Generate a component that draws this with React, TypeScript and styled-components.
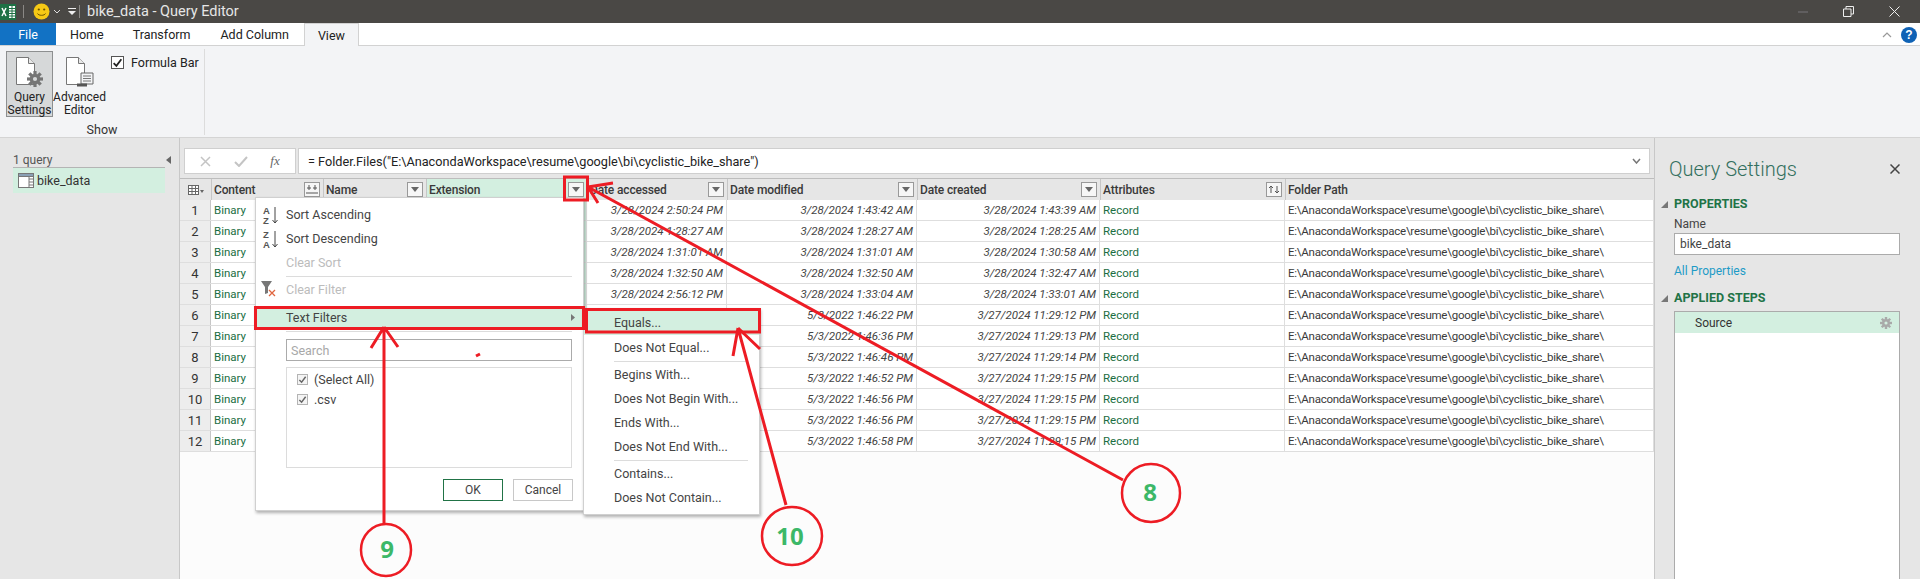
import React from 'react';
import styled, {createGlobalStyle} from 'styled-components';

const FONT = `Roboto, "Noto Sans", "Liberation Sans", sans-serif`;
const GREEN_ROW = '#d3efe0';
const PANEL = '#e6e6e6';
const RED = '#ed1c24';

const GlobalStyle = createGlobalStyle`
  html, body {
    margin: 0;
    padding: 0;
    background: #fff;
  }
  body {
    font-family: ${FONT};
    font-size: 12px;
    color: #333;
  }
`;

const Page = styled.div`
  position: relative;
  width: 1920px;
  height: 579px;
  overflow: hidden;
  display: flex;
  flex-direction: column;
`;

const TitleBar = styled.div`
  height: 23px;
  flex: none;
  display: flex;
  align-items: center;
  background: #4a4845;
  color: #e6e6e6;
  font-size: 14.5px;
`;

const TitleSep = styled.span<{$left: number; $right: number}>`
  width: 1px;
  height: 13px;
  margin: 0 ${p => p.$right}px 0 ${p => p.$left}px;
  background: #8a8885;
`;

const WindowButtons = styled.div`
  margin-left: auto;
  display: flex;
  align-items: center;
  gap: 35px;
  padding-right: 20px;
`;

const SmallChevron = styled.svg`
  margin-left: 3px;
`;

const QatArrow = styled.svg`
  margin-left: 7px;
`;

const TabBar = styled.div`
  height: 23px;
  flex: none;
  display: flex;
  align-items: stretch;
  background: #fff;
  position: relative;
  font-size: 12.5px;
  &::after {
    content: '';
    position: absolute;
    left: 0;
    right: 0;
    bottom: 0;
    height: 1px;
    background: #d2d2d2;
  }
`;

const FileTab = styled.div`
  width: 56px;
  background: #1272c4;
  color: #fff;
  display: flex;
  align-items: center;
  justify-content: center;
`;

const Tab = styled.div<{$active?: boolean; $left: number}>`
  margin-left: ${p => p.$left}px;
  padding: 0 14px;
  display: flex;
  align-items: center;
  color: #222;
  position: relative;
  z-index: 1;
  ${p =>
    p.$active &&
    `
    background: #f3f4f6;
    border: 1px solid #d2d2d2;
    border-bottom: 0;
    padding: 0 13px;
  `}
`;

const TabRight = styled.div`
  margin-left: auto;
  display: flex;
  align-items: center;
  gap: 9px;
  padding-right: 3px;
`;

const Ribbon = styled.div`
  height: 88px;
  flex: none;
  display: flex;
  background: #f3f4f6;
  border-bottom: 1px solid #d4d4d4;
  padding-top: 3px;
`;

const RibbonGroup = styled.div`
  width: 205px;
  height: 86px;
  border-right: 1px solid #dcdcdc;
  display: flex;
  flex-direction: column;
  box-sizing: border-box;
`;

const RibbonTools = styled.div`
  display: flex;
  padding-left: 6px;
  align-items: flex-start;
  margin-top: 2px;
`;

const RibbonTile = styled.div<{$active?: boolean}>`
  width: ${p => (p.$active ? 47 : 53)}px;
  height: 66px;
  box-sizing: border-box;
  display: flex;
  flex-direction: column;
  align-items: center;
  line-height: 13px;
  text-align: center;
  color: #222;
  padding-top: 4px;
  font-size: 12px;
  background: ${p => (p.$active ? '#d6d8d9' : 'transparent')};
  border: 1px solid ${p => (p.$active ? '#8d8f90' : 'transparent')};
  svg {
    margin-bottom: 3px;
    flex: none;
  }
`;

const CheckRow = styled.div`
  display: flex;
  align-items: center;
  gap: 7px;
  margin: 4px 0 0 5px;
  color: #222;
  font-size: 12.5px;
`;

const CheckBoxIcon = styled.span`
  width: 13px;
  height: 13px;
  flex: none;
  box-sizing: border-box;
  border: 1px solid #555;
  background: #fff;
  display: flex;
  align-items: center;
  justify-content: center;
`;

const GroupLabel = styled.div`
  text-align: center;
  margin-top: 5px;
  color: #333;
  font-size: 12.5px;
`;

const Workspace = styled.div`
  flex: 1;
  min-height: 0;
  display: flex;
`;

const QueriesPane = styled.div`
  width: 180px;
  flex: none;
  box-sizing: border-box;
  background: ${PANEL};
  border-right: 1px solid #c8c8c8;
  padding: 14px 14px 0 13px;
`;

const PaneHeader = styled.div`
  display: flex;
  align-items: center;
  justify-content: space-between;
  height: 15px;
  color: #555;
  border-bottom: 1px solid #b4b4b4;
  svg {
    margin-right: -6px;
  }
`;

const QueryItem = styled.div`
  height: 25px;
  background: ${GREEN_ROW};
  display: flex;
  align-items: center;
  gap: 3px;
  padding-left: 5px;
  color: #333;
  font-size: 12.5px;
`;

const MainPane = styled.div`
  flex: 1;
  min-width: 0;
  display: flex;
  flex-direction: column;
  background: #fcfcfc;
`;

const FormulaRow = styled.div`
  height: 40px;
  flex: none;
  box-sizing: border-box;
  background: ${PANEL};
  padding: 10px 4px 4px 4px;
  display: flex;
  gap: 2px;
`;

const FormulaButtons = styled.div`
  width: 112px;
  box-sizing: border-box;
  background: #fff;
  border: 1px solid #cfcfcf;
  display: flex;
  align-items: center;
  justify-content: space-around;
  padding: 0 4px;
`;

const FxLabel = styled.span`
  font-family: 'Liberation Serif', serif;
  font-style: italic;
  font-size: 13px;
  color: #666;
`;

const FormulaInput = styled.div`
  flex: 1;
  box-sizing: border-box;
  background: #fff;
  border: 1px solid #cfcfcf;
  display: flex;
  align-items: center;
  justify-content: space-between;
  padding: 0 8px 0 9px;
  font-size: 12.7px;
  color: #222;
`;

const GRID_COLUMNS = '31px 112px 103px 161px 140px 190px 183px 185px 1fr';

const GridHeader = styled.div`
  height: 22px;
  flex: none;
  box-sizing: border-box;
  display: grid;
  grid-template-columns: ${GRID_COLUMNS};
  background: ${PANEL};
  border-top: 1px solid #bdbdbd;
`;

const HeaderCell = styled.div<{$selected?: boolean}>`
  display: flex;
  align-items: center;
  justify-content: space-between;
  padding: 0 3px 0 2px;
  box-sizing: border-box;
  border-left: 1px solid #c6c6c6;
  font-weight: 500;
  letter-spacing: -0.15px;
  color: #3a3a3a;
  background: ${p => (p.$selected ? GREEN_ROW : 'transparent')};
`;

const CornerCell = styled.div`
  display: flex;
  align-items: center;
  justify-content: center;
`;

const FilterButton = styled.span`
  width: 16px;
  height: 15px;
  flex: none;
  box-sizing: border-box;
  border: 1px solid #999;
  background: #f6f6f6;
  display: flex;
  align-items: center;
  justify-content: center;
`;

const GridRow = styled.div`
  height: 21px;
  flex: none;
  box-sizing: border-box;
  display: grid;
  grid-template-columns: ${GRID_COLUMNS};
  background: #fff;
  border-bottom: 1px solid #dedede;
`;

const IndexCell = styled.div`
  display: flex;
  align-items: center;
  justify-content: center;
  background: #ededed;
  border-right: 1px solid #c6c6c6;
  font-size: 13px;
  color: #333;
`;

const Cell = styled.div<{$kind?: 'link' | 'date' | 'selected' | 'path'}>`
  display: flex;
  align-items: center;
  box-sizing: border-box;
  padding: 0 3px;
  white-space: nowrap;
  overflow: hidden;
  font-size: 11.5px;
  border-right: 1px solid #dedede;
  color: ${p => (p.$kind === 'link' ? '#1b6e43' : p.$kind === 'date' ? '#444' : '#3a3a3a')};
  font-style: ${p => (p.$kind === 'date' ? 'italic' : 'normal')};
  letter-spacing: ${p => (p.$kind === 'path' ? '-0.25px' : '0')};
  justify-content: ${p => (p.$kind === 'date' ? 'flex-end' : 'flex-start')};
  background: ${p => (p.$kind === 'selected' ? GREEN_ROW : 'transparent')};
`;

const SettingsPane = styled.div`
  width: 266px;
  flex: none;
  box-sizing: border-box;
  background: ${PANEL};
  border-left: 1px solid #c8c8c8;
  display: flex;
  flex-direction: column;
  padding: 16px 20px 0 19px;
`;

const SettingsHead = styled.div`
  display: flex;
  align-items: center;
  justify-content: space-between;
  height: 30px;
  margin-left: -5px;
  font-size: 20px;
  font-weight: 300;
  color: #33705e;
`;

const SectionTitle = styled.div<{$top: number}>`
  position: relative;
  margin-top: ${p => p.$top}px;
  font-weight: 700;
  font-size: 12.5px;
  line-height: 16px;
  color: #217346;
  svg {
    position: absolute;
    left: -13px;
    top: 5px;
  }
`;

const FieldLabel = styled.div`
  margin-top: 4px;
  line-height: 16px;
  color: #444;
`;

const TextBox = styled.div`
  margin-top: 1px;
  height: 22px;
  box-sizing: border-box;
  border: 1px solid #ababab;
  background: #fff;
  display: flex;
  align-items: center;
  padding: 0 5px;
  color: #444;
`;

const PropsLink = styled.div`
  margin-top: 8px;
  line-height: 16px;
  color: #1e9bc6;
`;

const StepsBox = styled.div`
  margin-top: 5px;
  flex: 1;
  border: 1px solid #ababab;
  border-bottom: 0;
  background: #fff;
`;

const StepRow = styled.div`
  height: 21px;
  background: ${GREEN_ROW};
  display: flex;
  align-items: center;
  justify-content: space-between;
  padding: 0 7px 0 20px;
  color: #333;
`;

const FilterMenu = styled.div`
  position: absolute;
  left: 255px;
  top: 197px;
  width: 329px;
  height: 314px;
  box-sizing: border-box;
  padding-top: 4px;
  background: #fff;
  border: 1px solid #d0d0d0;
  box-shadow: 1px 2px 3px rgba(0, 0, 0, 0.3);
  display: flex;
  flex-direction: column;
`;

const SubMenu = styled(FilterMenu)`
  left: 583px;
  top: 308px;
  width: 177px;
  height: 207px;
  padding-top: 1px;
`;

const MenuItem = styled.div<{$disabled?: boolean; $active?: boolean}>`
  height: ${p => (p.$active ? 25 : 24)}px;
  flex: none;
  display: flex;
  align-items: center;
  position: relative;
  padding-left: 30px;
  font-size: 12.5px;
  color: ${p => (p.$disabled ? '#bcbcbc' : '#444')};
  background: ${p => (p.$active ? GREEN_ROW : 'transparent')};
`;

const MenuIcon = styled.span`
  position: absolute;
  left: 4px;
  top: 3px;
  display: flex;
`;

const FilterItem = styled(MenuItem)`
  height: 22px;
  margin-top: 5px;
  justify-content: space-between;
  padding-right: 8px;
`;

const MenuSep = styled.div<{$y?: number}>`
  height: 1px;
  flex: none;
  margin: ${p => p.$y ?? 2}px 11px 0 30px;
  background: #dcdcdc;
`;

const SearchBox = styled.div`
  height: 22px;
  flex: none;
  box-sizing: border-box;
  margin: 7px 11px 0 30px;
  border: 1px solid #ababab;
  display: flex;
  align-items: center;
  padding: 0 4px;
  color: #a8a8a8;
  font-size: 12.5px;
`;

const ValueList = styled.div`
  height: 101px;
  flex: none;
  box-sizing: border-box;
  margin: 6px 11px 0 30px;
  border: 1px solid #dcdcdc;
  padding: 1px 10px;
`;

const ValueRow = styled.div`
  height: 20px;
  display: flex;
  align-items: center;
  gap: 6px;
  color: #444;
  font-size: 12.5px;
`;

const ValueCheck = styled.span`
  width: 11px;
  height: 11px;
  box-sizing: border-box;
  border: 1px solid #b4b4b4;
  background: #f4f4f4;
  display: flex;
  align-items: center;
  justify-content: center;
`;

const MenuButtons = styled.div`
  display: flex;
  justify-content: flex-end;
  gap: 10px;
  margin: 11px 10px 0 0;
`;

const MenuButton = styled.div<{$primary?: boolean}>`
  width: 60px;
  height: 22px;
  box-sizing: border-box;
  display: flex;
  align-items: center;
  justify-content: center;
  color: #444;
  background: #fff;
  border: 1px solid ${p => (p.$primary ? '#217346' : '#c8c8c8')};
`;

const Annotations = styled.svg`
  position: absolute;
  left: 0;
  top: 0;
  pointer-events: none;
`;

const StepNumber = styled.text`
  font-family: "Open Sans", ${FONT};
  font-weight: 700;
  font-size: 24px;
  fill: #3cb868;
  text-anchor: middle;
`;

const ExcelLogo = () => (
  <svg width="16" height="18" viewBox="0 0 16 18">
    <rect x="0" y="1" width="16" height="16" fill="#1e7145" />
    <rect x="9" y="3" width="6" height="12" fill="#fff" />
    <path d="M9 5.5h6M9 8h6M9 10.5h6M9 13h6M12 3v12" stroke="#1e7145" strokeWidth="1" />
    <path d="M2 5l4 8M6 5l-4 8" stroke="#fff" strokeWidth="1.5" />
  </svg>
);

const Smiley = () => (
  <svg width="17" height="17" viewBox="0 0 17 17">
    <circle cx="8.5" cy="8.5" r="8" fill="#f6c915" />
    <circle cx="5.8" cy="6.5" r="1.1" fill="#6b5200" />
    <circle cx="11.2" cy="6.5" r="1.1" fill="#6b5200" />
    <path d="M4.5 10.5c1 2.4 7 2.4 8 0" stroke="#6b5200" strokeWidth="1" fill="none" />
  </svg>
);

const PageIcon = ({children}: {children?: React.ReactNode}) => (
  <svg width="30" height="32" viewBox="0 0 30 32">
    <path d="M1.5 1.5h12l6 6v21h-18z" fill="#fff" stroke="#777" strokeWidth="1" />
    <path d="M13.5 1.5v6h6" fill="#e8e8e8" stroke="#777" strokeWidth="1" />
    {children}
  </svg>
);

const GearShape = ({
  cx,
  cy,
  r,
  fill,
  hole
}: {
  cx: number;
  cy: number;
  r: number;
  fill: string;
  hole: string;
}) => (
  <g fill={fill}>
    {[0, 45, 90, 135].map(a => (
      <rect
        key={a}
        x={cx - r * 0.2}
        y={cy - r}
        width={r * 0.4}
        height={r * 2}
        transform={`rotate(${a} ${cx} ${cy})`}
      />
    ))}
    <circle cx={cx} cy={cy} r={r * 0.66} />
    <circle cx={cx} cy={cy} r={r * 0.26} fill={hole} />
  </g>
);

const TableIcon = () => (
  <svg width="16" height="15" viewBox="0 0 16 15">
    <rect x="0.5" y="0.5" width="15" height="14" fill="#fff" stroke="#777" />
    <rect x="0.5" y="0.5" width="15" height="3" fill="#8aa0b5" stroke="#777" />
    <path d="M11 6h4M11 9h4M11 12h4M11 4v10" stroke="#777" strokeWidth="1" />
  </svg>
);

const FilterArrow = () => (
  <svg width="8" height="5" viewBox="0 0 8 5">
    <path d="M0 0h8L4 5z" fill="#666" />
  </svg>
);

const SortIcon = ({top, bottom}: {top: string; bottom: string}) => (
  <svg width="22" height="20" viewBox="0 0 22 20">
    <text x="3" y="9" fontFamily="Liberation Sans" fontSize="9.5" fontWeight="700" fill="#555">
      {top}
    </text>
    <text x="3" y="19" fontFamily="Liberation Sans" fontSize="9.5" fontWeight="700" fill="#555">
      {bottom}
    </text>
    <path d="M15 2v16M12.5 15l2.5 3 2.5-3" stroke="#444" strokeWidth="1" fill="none" />
  </svg>
);

const TickMark = ({size, color}: {size: number; color: string}) => (
  <svg width={size} height={size} viewBox="0 0 10 10">
    <path d="M1.5 5.5l2.5 2.5 4.5-6" stroke={color} strokeWidth="1.6" fill="none" />
  </svg>
);

// rows 6-12 of "Date accessed" sit under the text filter submenu
const ROWS = [
  ['3/28/2024 2:50:24 PM', '3/28/2024 1:43:42 AM', '3/28/2024 1:43:39 AM'],
  ['3/28/2024 1:28:27 AM', '3/28/2024 1:28:27 AM', '3/28/2024 1:28:25 AM'],
  ['3/28/2024 1:31:01 AM', '3/28/2024 1:31:01 AM', '3/28/2024 1:30:58 AM'],
  ['3/28/2024 1:32:50 AM', '3/28/2024 1:32:50 AM', '3/28/2024 1:32:47 AM'],
  ['3/28/2024 2:56:12 PM', '3/28/2024 1:33:04 AM', '3/28/2024 1:33:01 AM'],
  ['', '5/3/2022 1:46:22 PM', '3/27/2024 11:29:12 PM'],
  ['', '5/3/2022 1:46:36 PM', '3/27/2024 11:29:13 PM'],
  ['', '5/3/2022 1:46:46 PM', '3/27/2024 11:29:14 PM'],
  ['', '5/3/2022 1:46:52 PM', '3/27/2024 11:29:15 PM'],
  ['', '5/3/2022 1:46:56 PM', '3/27/2024 11:29:15 PM'],
  ['', '5/3/2022 1:46:56 PM', '3/27/2024 11:29:15 PM'],
  ['', '5/3/2022 1:46:58 PM', '3/27/2024 11:29:15 PM']
];

const FOLDER = 'E:\\AnacondaWorkspace\\resume\\google\\bi\\cyclistic_bike_share\\';

const App = () => (
  <Page>
    <GlobalStyle />
    <TitleBar>
      <ExcelLogo />
      <TitleSep $left={7} $right={9} />
      <Smiley />
      <SmallChevron width="8" height="5" viewBox="0 0 8 5">
        <path d="M1 1l3 3 3-3" stroke="#ddd" strokeWidth="1" fill="none" />
      </SmallChevron>
      <QatArrow width="8" height="9" viewBox="0 0 8 9">
        <path d="M0 1.5h8" stroke="#eee" strokeWidth="1" />
        <path d="M0 4h8L4 8z" fill="#eee" />
      </QatArrow>
      <TitleSep $left={3} $right={7} />
      bike_data - Query Editor
      <WindowButtons>
        <svg width="10" height="2" viewBox="0 0 10 2">
          <path d="M0 1h10" stroke="#77757a" />
        </svg>
        <svg width="11" height="11" viewBox="0 0 11 11">
          <path d="M0.5 3h7.5v7.5h-7.5zM3 3V0.5h7.5V8H8" stroke="#eee" fill="none" />
        </svg>
        <svg width="11" height="11" viewBox="0 0 11 11">
          <path d="M0.5 0.5l10 10M10.5 0.5l-10 10" stroke="#eee" fill="none" />
        </svg>
      </WindowButtons>
    </TitleBar>

    <TabBar>
      <FileTab>File</FileTab>
      <Tab $left={0}>Home</Tab>
      <Tab $left={1}>Transform</Tab>
      <Tab $left={2}>Add Column</Tab>
      <Tab $left={1} $active>
        View
      </Tab>
      <TabRight>
        <svg width="10" height="6" viewBox="0 0 10 6">
          <path d="M1 5l4-4 4 4" stroke="#999" strokeWidth="1.2" fill="none" />
        </svg>
        <svg width="16" height="16" viewBox="0 0 16 16">
          <circle cx="8" cy="8" r="8" fill="#0f62b5" />
          <text
            x="8"
            y="12"
            textAnchor="middle"
            fontFamily="Liberation Sans"
            fontWeight="700"
            fontSize="12"
            fill="#fff"
          >
            ?
          </text>
        </svg>
      </TabRight>
    </TabBar>

    <Ribbon>
      <RibbonGroup>
        <RibbonTools>
          <RibbonTile $active>
            <PageIcon>
              <GearShape cx={20} cy={23} r={8} fill="#757575" hole="#d6d8d9" />
            </PageIcon>
            Query
            <br />
            Settings
          </RibbonTile>
          <RibbonTile>
            <PageIcon>
              <path d="M16 17h12v11h-12z" fill="#f3f4f6" stroke="#666" />
              <path d="M18 20h8M18 22.5h8M18 25h8" stroke="#777" />
              <path d="M12 29h10" stroke="#555" strokeWidth="3" />
            </PageIcon>
            Advanced
            <br />
            Editor
          </RibbonTile>
          <CheckRow>
            <CheckBoxIcon>
              <TickMark size={11} color="#222" />
            </CheckBoxIcon>
            Formula Bar
          </CheckRow>
        </RibbonTools>
        <GroupLabel>Show</GroupLabel>
      </RibbonGroup>
    </Ribbon>

    <Workspace>
      <QueriesPane>
        <PaneHeader>
          1 query
          <svg width="5" height="8" viewBox="0 0 5 8">
            <path d="M5 0v8L0 4z" fill="#666" />
          </svg>
        </PaneHeader>
        <QueryItem>
          <TableIcon />
          bike_data
        </QueryItem>
      </QueriesPane>

      <MainPane>
        <FormulaRow>
          <FormulaButtons>
            <svg width="11" height="11" viewBox="0 0 11 11">
              <path d="M1 1l9 9M10 1l-9 9" stroke="#c4c4c4" strokeWidth="1.5" />
            </svg>
            <svg width="14" height="11" viewBox="0 0 14 11">
              <path d="M1 6l4 4 8-9" stroke="#c4c4c4" strokeWidth="2" fill="none" />
            </svg>
            <FxLabel>fx</FxLabel>
          </FormulaButtons>
          <FormulaInput>
            = Folder.Files("E:\AnacondaWorkspace\resume\google\bi\cyclistic_bike_share")
            <svg width="9" height="6" viewBox="0 0 9 6">
              <path d="M1 1l3.5 4L8 1" stroke="#777" strokeWidth="1.5" fill="none" />
            </svg>
          </FormulaInput>
        </FormulaRow>

        <GridHeader>
          <CornerCell>
            <svg width="16" height="10" viewBox="0 0 16 10">
              <rect x="0.5" y="0.5" width="10" height="9" fill="#fff" stroke="#666" />
              <path d="M0.5 3.5h10M0.5 6.5h10M4 0.5v9M7.5 0.5v9" stroke="#666" />
              <path d="M12 5h4l-2 3z" fill="#666" />
            </svg>
          </CornerCell>
          <HeaderCell>
            Content
            <FilterButton>
              <svg width="12" height="9" viewBox="0 0 12 9">
                <path d="M3 0v5M1 3h4M9 0v5M7 3h4M0 8h12" stroke="#555" strokeWidth="1" />
              </svg>
            </FilterButton>
          </HeaderCell>
          <HeaderCell>
            Name
            <FilterButton>
              <FilterArrow />
            </FilterButton>
          </HeaderCell>
          <HeaderCell $selected>
            Extension
            <FilterButton>
              <FilterArrow />
            </FilterButton>
          </HeaderCell>
          <HeaderCell>
            Date accessed
            <FilterButton>
              <FilterArrow />
            </FilterButton>
          </HeaderCell>
          <HeaderCell>
            Date modified
            <FilterButton>
              <FilterArrow />
            </FilterButton>
          </HeaderCell>
          <HeaderCell>
            Date created
            <FilterButton>
              <FilterArrow />
            </FilterButton>
          </HeaderCell>
          <HeaderCell>
            Attributes
            <FilterButton>
              <svg width="12" height="9" viewBox="0 0 12 9">
                <path d="M3 8V1M1 3l2-2 2 2M9 8V1M7 6l2 2 2-2" stroke="#555" fill="none" />
              </svg>
            </FilterButton>
          </HeaderCell>
          <HeaderCell>Folder Path</HeaderCell>
        </GridHeader>

        {ROWS.map((row, i) => (
          <GridRow key={i}>
            <IndexCell>{i + 1}</IndexCell>
            <Cell $kind="link">Binary</Cell>
            <Cell />
            <Cell $kind="selected" />
            <Cell $kind="date">{row[0]}</Cell>
            <Cell $kind="date">{row[1]}</Cell>
            <Cell $kind="date">{row[2]}</Cell>
            <Cell $kind="link">Record</Cell>
            <Cell $kind="path">{FOLDER}</Cell>
          </GridRow>
        ))}
      </MainPane>

      <SettingsPane>
        <SettingsHead>
          Query Settings
          <svg width="10" height="10" viewBox="0 0 10 10">
            <path d="M0.5 0.5l9 9M9.5 0.5l-9 9" stroke="#444" strokeWidth="1.5" />
          </svg>
        </SettingsHead>
        <SectionTitle $top={12}>
          <svg width="7" height="7" viewBox="0 0 7 7">
            <path d="M7 0v7H0z" fill="#777" />
          </svg>
          PROPERTIES
        </SectionTitle>
        <FieldLabel>Name</FieldLabel>
        <TextBox>bike_data</TextBox>
        <PropsLink>All Properties</PropsLink>
        <SectionTitle $top={11}>
          <svg width="7" height="7" viewBox="0 0 7 7">
            <path d="M7 0v7H0z" fill="#777" />
          </svg>
          APPLIED STEPS
        </SectionTitle>
        <StepsBox>
          <StepRow>
            Source
            <svg width="12" height="12" viewBox="0 0 16 16">
              <GearShape cx={8} cy={8} r={8} fill="#a9a9a9" hole={GREEN_ROW} />
            </svg>
          </StepRow>
        </StepsBox>
      </SettingsPane>
    </Workspace>

    <FilterMenu>
      <MenuItem>
        <MenuIcon>
          <SortIcon top="A" bottom="Z" />
        </MenuIcon>
        Sort Ascending
      </MenuItem>
      <MenuItem>
        <MenuIcon>
          <SortIcon top="Z" bottom="A" />
        </MenuIcon>
        Sort Descending
      </MenuItem>
      <MenuItem $disabled>Clear Sort</MenuItem>
      <MenuSep />
      <MenuItem $disabled>
        <MenuIcon>
          <svg width="18" height="18" viewBox="0 0 18 18">
            <path d="M1 1h11L8 7v6l-3 1V7z" fill="#777" />
            <path d="M9 10l6 6M15 10l-6 6" stroke="#e0653f" strokeWidth="1.3" />
          </svg>
        </MenuIcon>
        Clear Filter
      </MenuItem>
      <FilterItem $active>
        Text Filters
        <svg width="4" height="7" viewBox="0 0 4 7">
          <path d="M0 0l4 3.5L0 7z" fill="#777" />
        </svg>
      </FilterItem>
      <MenuSep $y={3} />
      <SearchBox>Search</SearchBox>
      <ValueList>
        <ValueRow>
          <ValueCheck>
            <TickMark size={9} color="#666" />
          </ValueCheck>
          (Select All)
        </ValueRow>
        <ValueRow>
          <ValueCheck>
            <TickMark size={9} color="#666" />
          </ValueCheck>
          .csv
        </ValueRow>
      </ValueList>
      <MenuButtons>
        <MenuButton $primary>OK</MenuButton>
        <MenuButton>Cancel</MenuButton>
      </MenuButtons>
    </FilterMenu>

    <SubMenu>
      <MenuItem $active>Equals...</MenuItem>
      <MenuItem>Does Not Equal...</MenuItem>
      <MenuSep />
      <MenuItem>Begins With...</MenuItem>
      <MenuItem>Does Not Begin With...</MenuItem>
      <MenuItem>Ends With...</MenuItem>
      <MenuItem>Does Not End With...</MenuItem>
      <MenuSep />
      <MenuItem>Contains...</MenuItem>
      <MenuItem>Does Not Contain...</MenuItem>
    </SubMenu>

    <Annotations width="1920" height="579" viewBox="0 0 1920 579" fill="none">
      <g stroke={RED} strokeWidth="3">
        <rect x="564.5" y="177" width="23" height="23" />
        <rect x="255.5" y="307.5" width="328" height="21" />
        <rect x="586.5" y="309.5" width="173" height="22.5" />
        <path d="M588 187L1123 480M588 187L613 183M588 187L598 203" />
        <path d="M384 327V525M384 327L371 348M384 327L398 347" />
        <path d="M738 328L786 505M738 328L733 356M738 328L760 349" />
        <path d="M476 356l4-2" />
      </g>
      <g stroke={RED} strokeWidth="2.5">
        <circle cx="1151" cy="493" r="29" />
        <ellipse cx="386" cy="550" rx="25" ry="26" />
        <ellipse cx="792" cy="536" rx="30" ry="29" />
      </g>
      <StepNumber x="1150" y="501">8</StepNumber>
      <StepNumber x="387" y="558">9</StepNumber>
      <StepNumber x="790" y="545">10</StepNumber>
    </Annotations>
  </Page>
);

export default App;
